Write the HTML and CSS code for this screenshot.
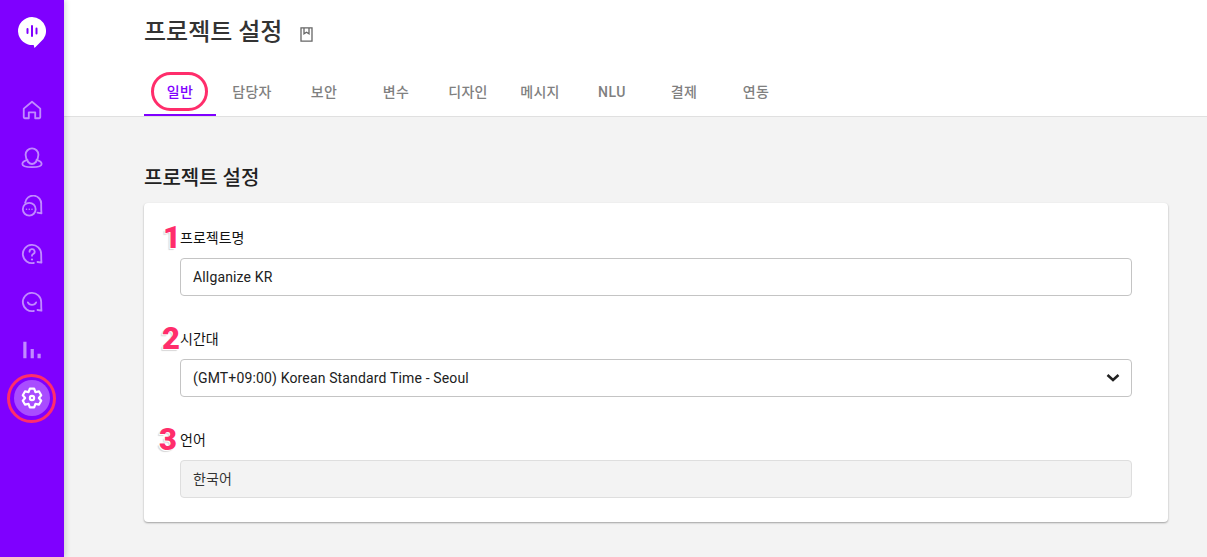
FILE: index.html
```html
<!DOCTYPE html>
<html lang="ko">
<head>
<meta charset="utf-8">
<title>프로젝트 설정</title>
<link rel="stylesheet" href="styles.css">
</head>
<body>
<div class="app">
  <nav class="sidebar">
    <div class="logo">
      <svg width="28" height="32" viewBox="0 0 28 32"><path class="logo-bubble" d="M14 0a14 14 0 0 1 8 25.500l-5.500 5.500-.8-3.100A14 14 0 1 1 14 0z"/><path class="logo-bars" d="M9.500 12v4M14 9v10M18.500 11.500v5"/></svg>
    </div>
    <ul class="nav-list">
      <li class="nav-item">
        <svg class="nav-icon" viewBox="0 0 24 24"><path d="M3 10.500 12 3l9 7.500V20a1 1 0 0 1-1 1h-4.500v-6.500h-7V21H4a1 1 0 0 1-1-1z"/></svg>
      </li>
      <li class="nav-item">
        <svg class="nav-icon" viewBox="0 0 24 24"><path d="M8 16.500C6 14 5 11 5 8.500a7 7 0 0 1 14 0c0 2.500-1 5.500-3 8"/><path d="M7 14C3.500 15 1.500 16.500 1.500 18.500c0 2.500 4.500 3.500 10.500 3.500s10.500-1 10.500-3.500c0-2-2-3.500-5.500-4.500"/><path d="M8 16.500c1 1.300 2.500 2 4 2s3-.7 4-2"/></svg>
      </li>
      <li class="nav-item">
        <svg class="nav-icon" viewBox="0 0 24 24"><path d="M4.500 8.500A8.800 8.800 0 0 1 22 10.500c0 3 0 6 .3 9.500l-4.300-.8"/><circle cx="9" cy="15.500" r="7"/><path class="nav-dots" d="M6 15.500h.01M9 15.500h.01M12 15.500h.01"/></svg>
      </li>
      <li class="nav-item">
        <svg class="nav-icon" viewBox="0 0 24 24"><path d="M14 21.800A10 10 0 1 1 22 12c0 3 0 6 .3 9.500l-4.300-.8"/><path d="M9.300 9.500a2.800 2.800 0 1 1 4 2.500c-.9.500-1.300 1-1.300 2"/><path class="nav-dot-q" d="M12 18h.01"/></svg>
      </li>
      <li class="nav-item">
        <svg class="nav-icon" viewBox="0 0 24 24"><path d="M14 21.800A10 10 0 1 1 22 12c0 3 0 6 .3 9.500l-4.300-.8"/><path d="M7.500 12.500c1.500 3.500 7.500 3.500 9 0"/></svg>
      </li>
      <li class="nav-item">
        <svg class="nav-icon nav-icon-solid" viewBox="0 0 24 24"><path d="M2.500 3H6v18H2.500zM10.500 11H14v10h-3.500zM18 16h3.500v5H18z"/></svg>
      </li>
      <li class="nav-item nav-item-active">
        <span class="nav-active-bg">
          <svg class="nav-icon nav-icon-white" viewBox="0 0 24 24"><path d="M9.640 1.770h4.720l1.390 3.730 3.930-.66 2.360 4.090L19.500 12l2.540 3.070-2.360 4.090-3.930-.66-1.390 3.730H9.640L8.250 18.500l-3.930.66-2.360-4.090L4.500 12 1.960 8.930l2.360-4.090 3.930.66z"/><circle cx="12" cy="12" r="2.300"/></svg>
        </span>
        <span class="ring ring-gear"></span>
      </li>
    </ul>
  </nav>

  <main class="main">
    <header class="topbar">
      <div class="title-row">
        <h1 class="page-title">프로젝트 설정</h1>
        <svg class="book-icon" width="13" height="15" viewBox="0 0 13 15"><path d="M1 .8h11v13.400H1zM4 .8v6l2.500-1.500L9 6.800V.8"/></svg>
      </div>
      <div class="tabs">
        <div class="tab tab-active">일반<span class="ring ring-tab"></span></div>
        <div class="tab">담당자</div>
        <div class="tab">보안</div>
        <div class="tab">변수</div>
        <div class="tab">디자인</div>
        <div class="tab">메시지</div>
        <div class="tab tab-latin">NLU</div>
        <div class="tab">결제</div>
        <div class="tab">연동</div>
      </div>
    </header>

    <section class="content">
      <h2 class="section-title">프로젝트 설정</h2>
      <div class="card">
        <div class="field">
          <label class="field-label"><span class="mark mark-1">1</span>프로젝트명</label>
          <div class="control">Allganize KR</div>
        </div>
        <div class="field">
          <label class="field-label"><span class="mark mark-2">2</span>시간대</label>
          <div class="control control-select">
            <span>(GMT+09:00) Korean Standard Time - Seoul</span>
            <svg class="chevron" width="14" height="10" viewBox="0 0 14 10"><path d="M1.500 2l5.500 5 5.500-5"/></svg>
          </div>
        </div>
        <div class="field">
          <label class="field-label"><span class="mark mark-3">3</span>언어</label>
          <div class="control control-disabled">한국어</div>
        </div>
      </div>
    </section>
  </main>
</div>
</body>
</html>
```
FILE: styles.css
```css
* { box-sizing: border-box; }
html, body { margin: 0; padding: 0; height: 100%; overflow: hidden; }
body {
  font-family: Roboto, "Noto Sans CJK KR", sans-serif;
  color: #212121;
  background: #f3f3f3;
}
.app { display: flex; height: 557px; }

.sidebar {
  width: 64px;
  flex: none;
  background: #7f00ff;
  position: relative;
  z-index: 2;
  box-shadow: 2px 0 5px rgba(0,0,0,.14);
  display: flex;
  flex-direction: column;
  align-items: center;
}
.logo { height: 86px; padding-top: 17px; display: flex; justify-content: center; }
.logo-bubble { fill: #fff; }
.logo-bars { fill: none; stroke: #7f00ff; stroke-width: 2; stroke-linecap: round; }
.nav-list { list-style: none; margin: 0; padding: 0; display: flex; flex-direction: column; }
.nav-item { width: 48px; height: 48px; display: flex; align-items: center; justify-content: center; position: relative; }
.nav-icon { width: 22px; height: 22px; fill: none; stroke: #c18aff; stroke-width: 2; stroke-linejoin: round; stroke-linecap: round; }
.nav-dots { stroke-width: 1.700; }
.nav-dot-q { stroke-width: 2.400; }
.nav-icon-solid { fill: #c18aff; stroke: none; }
.nav-icon-white { stroke: #fff; stroke-width: 2.400; }
.nav-active-bg { width: 36px; height: 36px; border-radius: 50%; background: #a94dff; display: flex; align-items: center; justify-content: center; }

.ring { position: absolute; border: 3px solid #ff2d6b; pointer-events: none; }
.ring-gear { left: -1px; top: 0; width: 49px; height: 49px; border-radius: 50%; }
.ring-tab { left: 7px; top: 0; width: 57px; height: 39px; border-radius: 20px; }

.main { flex: 1; min-width: 0; display: flex; flex-direction: column; }
.topbar { height: 117px; background: #fff; border-bottom: 1px solid #e0e0e0; padding: 0 80px; display: flex; flex-direction: column; }
.title-row { height: 72px; display: flex; align-items: flex-start; padding-top: 16px; }
.page-title { margin: 0; font-size: 24px; line-height: 32px; font-weight: 500; color: #333; }
.book-icon { margin: 11px 0 0 18px; fill: none; stroke: #666; stroke-width: 1.300; }
.tabs { display: flex; height: 44px; }
.tab { width: 72px; height: 44px; display: flex; align-items: center; justify-content: center; font-size: 14px; letter-spacing: .25px; font-weight: 500; color: #808080; position: relative; padding-bottom: 6px; }
.tab-active { color: #7f00ff; border-bottom: 2px solid #7f00ff; padding-bottom: 4px; }
.tab-latin { padding-bottom: 4px; letter-spacing: .5px; }

.content { padding: 0 39px 0 80px; }
.section-title { margin: 47px 0 11px; font-size: 20px; line-height: 28px; font-weight: 500; color: #212121; }
.card { background: #fff; border-radius: 4px; box-shadow: 0 1px 2px rgba(0,0,0,.35); height: 319px; padding: 24px 36px 0; display: flex; flex-direction: column; gap: 32px; }
.field { display: flex; flex-direction: column; }
.field-label { height: 20px; margin-bottom: 11px; font-size: 14px; line-height: 22px; font-weight: 400; position: relative; color: #111; }
.mark { position: absolute; font-family: Roboto, sans-serif; font-weight: 900; font-size: 31px; line-height: 30px; color: #ff2d6b; text-shadow: -1px 1px 0 #fff, -2px 2px 1px rgba(0,0,0,.16); }
.mark-1 { left: -17px; top: -4px; }
.mark-2 { left: -18px; top: -4px; }
.mark-3 { left: -21px; top: -4px; }
.control { height: 38px; border: 1px solid #c4c4c4; border-radius: 4px; padding: 0 12px; font-size: 14px; letter-spacing: .15px; line-height: 36px; color: #212121; }
.control-select { display: flex; justify-content: space-between; align-items: center; }
.control-disabled { background: #f3f3f3; border-color: #dedede; color: #333; }
.chevron { fill: none; stroke: #212121; stroke-width: 2.500; margin-right: -1px; }
```
